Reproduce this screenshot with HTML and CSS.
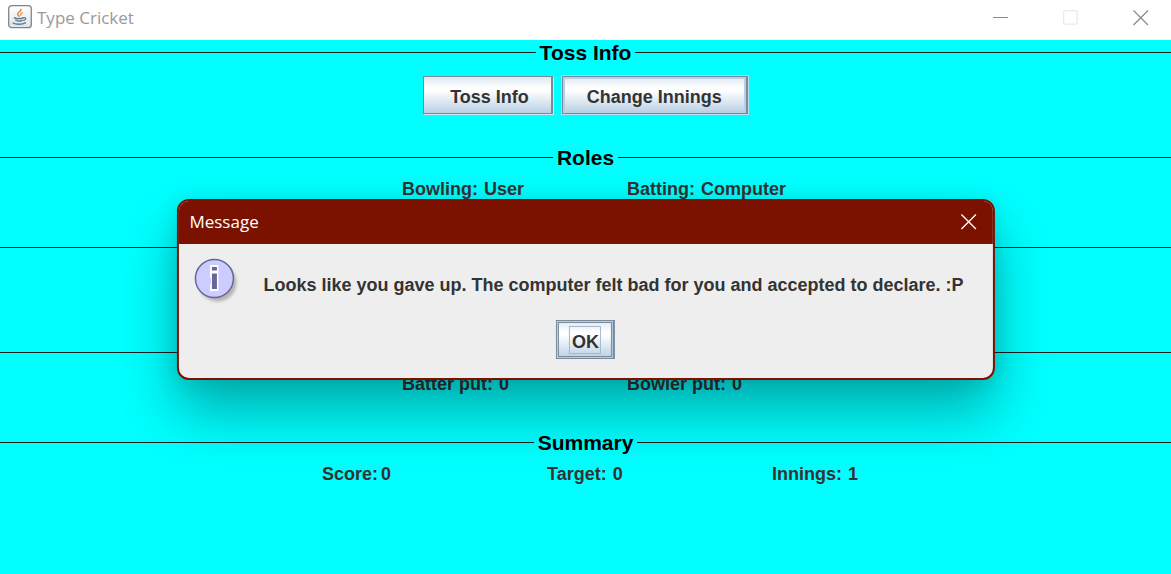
FILE: index.html
```html
<!DOCTYPE html>
<html lang="en">
<head>
<meta charset="utf-8">
<meta name="viewport" content="width=device-width, initial-scale=1">
<title>Type Cricket</title>
<link rel="stylesheet" href="styles.css">
</head>
<body>
<div class="window">
  <header class="titlebar">
    <svg class="app-icon" width="24" height="24" viewBox="0 0 24 24" aria-hidden="true">
      <defs>
        <linearGradient id="tile" x1="0" y1="0" x2="0" y2="1">
          <stop offset="0" stop-color="#ffffff"/>
          <stop offset="1" stop-color="#dfe2e6"/>
        </linearGradient>
      </defs>
      <rect x="0.7" y="0.7" width="22.6" height="22" rx="3" fill="url(#tile)" stroke="#7b8791" stroke-width="1.3"/>
      <g fill="none" stroke-linecap="round">
        <path d="M12.800 4.500C13.500 6.500 9 7.300 9.700 9.300C10 10.300 11 10.500 11 11.300" stroke="#e8904a" stroke-width="1.700"/>
        <path d="M14.500 7.800C12.500 8.400 12.300 9.300 13 10.300" stroke="#e8904a" stroke-width="1.200"/>
        <path d="M6.500 12.800C8 14 13.500 13.800 15.300 12.800" stroke="#58799a" stroke-width="1.500"/>
        <path d="M15.800 12.600C18.600 12 18.200 15 15.400 15.500" stroke="#58799a" stroke-width="1.200"/>
        <path d="M7.700 15.300C9.500 16.300 12.500 16.200 14.200 15.400" stroke="#58799a" stroke-width="1.300"/>
        <path d="M5.200 18C7.500 19.600 14.500 19.600 17.300 17.800" stroke="#58799a" stroke-width="1.500"/>
      </g>
    </svg>
    <h1 class="app-title">Type Cricket</h1>
    <div class="window-controls">
      <button type="button" class="icon-button" aria-label="Minimize">
        <svg width="16" height="16" viewBox="0 0 16 16"><path d="M0 7.500H15" stroke="#8c8c8c"/></svg>
      </button>
      <button type="button" class="icon-button" aria-label="Maximize" disabled>
        <svg width="16" height="16" viewBox="0 0 16 16"><rect x=".7" y=".7" width="13.500" height="13.500" rx="1" fill="none" stroke="#ebebeb" stroke-width="1.300"/></svg>
      </button>
      <button type="button" class="icon-button" aria-label="Close">
        <svg width="16" height="16" viewBox="0 0 16 16"><path d="M.5 .5L15 15M15 .5L.5 15" stroke="#8c8c8c" stroke-width="1.300"/></svg>
      </button>
    </div>
  </header>

  <main class="board">
    <section class="panel panel-tall">
      <h2 class="panel-title">Toss Info</h2>
      <div class="actions">
        <button type="button" class="metal-button">Toss Info</button>
        <button type="button" class="metal-button metal-button-active">Change Innings</button>
      </div>
    </section>
    <section class="panel">
      <h2 class="panel-title">Roles</h2>
      <dl class="pairs">
        <div class="pair"><dt>Bowling:</dt><dd>User</dd></div>
        <div class="pair"><dt>Batting:</dt><dd>Computer</dd></div>
      </dl>
    </section>
    <section class="panel panel-tall">
      <div class="panel-title"></div>
    </section>
    <section class="panel">
      <div class="panel-title"></div>
      <dl class="pairs">
        <div class="pair"><dt>Batter put:</dt><dd>0</dd></div>
        <div class="pair"><dt>Bowler put:</dt><dd>0</dd></div>
      </dl>
    </section>
    <section class="panel">
      <h2 class="panel-title">Summary</h2>
      <dl class="pairs pairs-three">
        <div class="pair pair-tight"><dt>Score:</dt><dd>0</dd></div>
        <div class="pair"><dt>Target:</dt><dd>0</dd></div>
        <div class="pair"><dt>Innings:</dt><dd>1</dd></div>
      </dl>
    </section>
  </main>
</div>

<div class="dialog" role="dialog" aria-modal="true" aria-labelledby="dialog-title" aria-describedby="dialog-text">
  <div class="dialog-bar">
    <h2 class="dialog-title" id="dialog-title">Message</h2>
    <button type="button" class="icon-button" aria-label="Close message">
      <svg width="16" height="16" viewBox="0 0 16 16"><path d="M.5 .5L15 15M15 .5L.5 15" stroke="#fff" stroke-width="1.300"/></svg>
    </button>
  </div>
  <div class="dialog-body">
    <div class="dialog-message">
      <svg class="info-icon" width="48" height="48" viewBox="0 0 48 48" aria-hidden="true">
        <defs>
          <filter id="soft" x="-20%" y="-20%" width="140%" height="140%"><feGaussianBlur stdDeviation="1.500"/></filter>
        </defs>
        <circle cx="23.500" cy="24.500" r="19" fill="#8c8c8c" opacity=".6" filter="url(#soft)"/>
        <circle cx="20.500" cy="20.500" r="19" fill="#ccccff" stroke="#666699" stroke-width="1.500"/>
        <path d="M16 7H24.500V33H16V26.500H17V20H16Z" fill="#fff"/>
        <path d="M18 9H23V12.500H18ZM18 15.500H23V31H18Z" fill="#666699"/>
      </svg>
      <p class="dialog-text" id="dialog-text">Looks like you gave up. The computer felt bad for you and accepted to declare. :P</p>
    </div>
    <button type="button" class="metal-button metal-button-ok"><span class="focus-mark">OK</span></button>
  </div>
</div>
</body>
</html>
```
FILE: styles.css
```css
* {
  box-sizing: border-box;
}

body {
  margin: 0;
  background: #00ffff;
  color: #333333;
  font: bold 18px/22px "Liberation Sans", Arial, sans-serif;
}

h1, h2, p, dl, dd {
  margin: 0;
}

.window {
  display: flex;
  flex-direction: column;
  min-height: 100vh;
}

.titlebar {
  display: flex;
  align-items: center;
  height: 40px;
  padding: 0 22px 4px 8px;
  background: #ffffff;
}

.app-icon {
  margin-bottom: 2px;
}

.app-title {
  margin-left: 5px;
  color: #999999;
  font: 17px/24px "Open Sans", "Noto Sans", sans-serif;
}

.window-controls {
  display: flex;
  gap: 54px;
  margin-left: auto;
}

.icon-button {
  display: flex;
  padding: 0;
  border: 0;
  background: none;
}

.board {
  flex: 1;
}

.panel {
  min-height: 90px;
}

.panel-tall {
  min-height: 105px;
}

.panel-title {
  display: flex;
  align-items: center;
  gap: 4px;
  height: 25px;
  color: #000000;
  font-size: 21px;
  line-height: 25px;
}

.panel-title:empty {
  gap: 0;
}

.panel-title::before,
.panel-title::after {
  content: "";
  flex: 1;
  height: 1px;
  background: #101c1c;
}

.actions {
  display: flex;
  justify-content: center;
  gap: 9px;
  padding-top: 11px;
}

.metal-button {
  height: 38px;
  padding: 4px 22px 0 26px;
  border: 1px solid #7a8a99;
  border-right-width: 2px;
  background: linear-gradient(#dde8f3, #ffffff 30%, #ffffff 38%, #b8cfe5);
  box-shadow: 1px 1px 0 #d5e4ee;
  color: #333333;
  font: bold 18px/22px "Liberation Sans", Arial, sans-serif;
}

.metal-button-active {
  padding: 4px 24px 0 24px;
  outline: 1px solid #b8e0ee;
  box-shadow: inset 0 0 0 2px #b8cfe5;
}

.pairs {
  display: grid;
  grid-template-columns: 225px 142px;
  justify-content: center;
  padding-top: 8px;
}

.pairs-three {
  grid-template-columns: 225px 225px 77px;
}

.pair {
  display: flex;
  gap: 6px;
  white-space: nowrap;
}

.pair-tight {
  gap: 3px;
}

.dialog {
  position: absolute;
  top: 199px;
  left: 50%;
  transform: translateX(-50%);
  overflow: hidden;
  border: 2px solid #7b1200;
  border-radius: 12px;
  background: #eeeeee;
  box-shadow: 0 32px 56px rgba(0, 0, 0, 0.32), 0 2px 20px rgba(0, 0, 0, 0.1);
}

.dialog-bar {
  display: flex;
  align-items: center;
  justify-content: space-between;
  height: 43px;
  padding: 0 16px 2px 11px;
  background: #7b1200;
}

.dialog-title {
  color: #ffffff;
  font: 17px/24px "Open Sans", "Noto Sans", sans-serif;
}

.dialog-body {
  display: flex;
  flex-direction: column;
  align-items: center;
  padding: 14px 15px 19px;
}

.dialog-message {
  display: flex;
  gap: 22px;
}

.dialog-text {
  padding: 16px 14px 0 0;
  white-space: nowrap;
}

.metal-button-ok {
  height: 39px;
  margin-top: 14px;
  padding: 0 12px;
  border-color: #7a8a99;
  box-shadow: inset 0 0 0 1px #b8cfe5, inset 0 0 0 2px #7a8a99;
}

.focus-mark {
  display: block;
  padding: 4px 1px 0 2px;
  border: 1px solid #a3b8cc;
}
```
